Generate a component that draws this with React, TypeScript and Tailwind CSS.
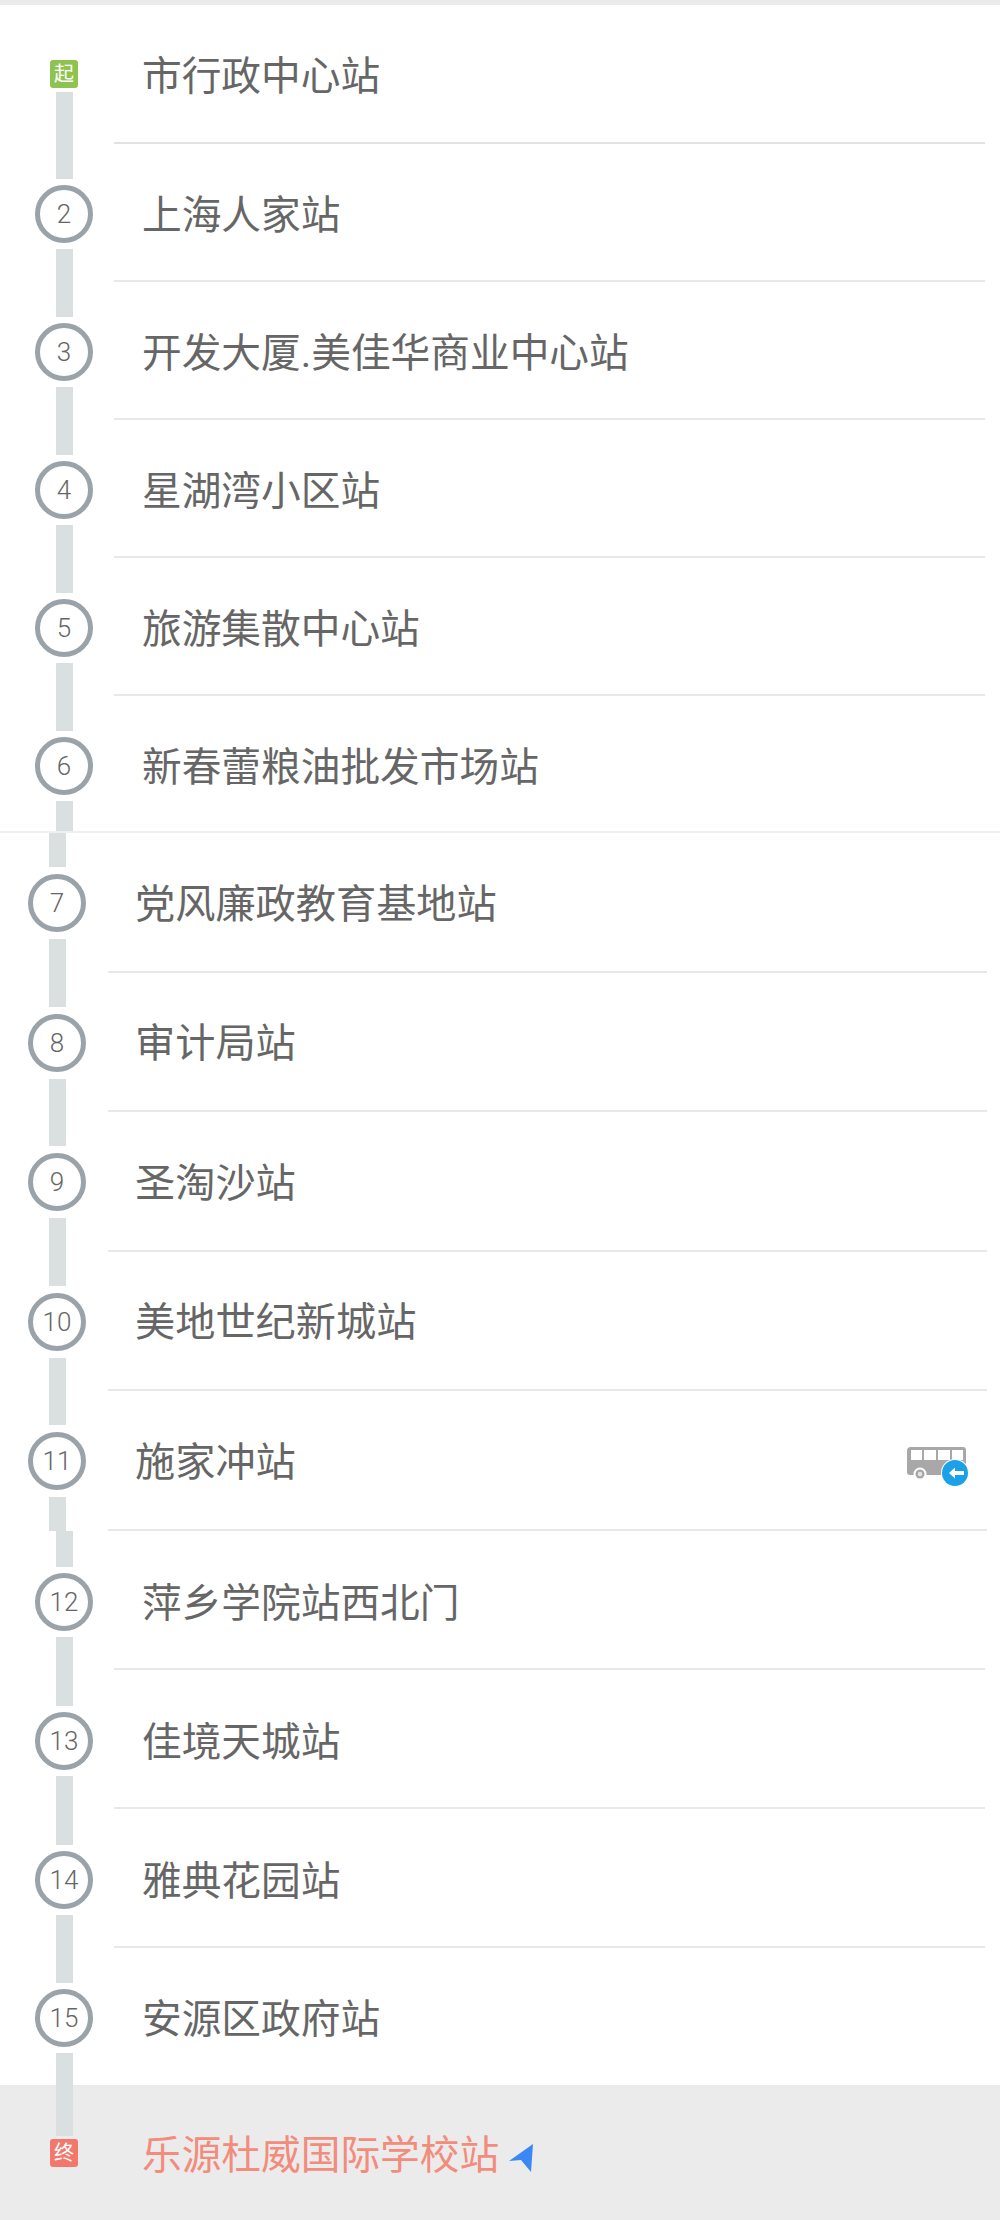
const FONT = "font-['Roboto','Noto_Sans_CJK_SC',sans-serif]";

type Stop = { n: number; name: string; bus?: boolean };

const SECTION_ONE: Stop[] = [
  { n: 2, name: "上海人家站" },
  { n: 3, name: "开发大厦.美佳华商业中心站" },
  { n: 4, name: "星湖湾小区站" },
  { n: 5, name: "旅游集散中心站" },
  { n: 6, name: "新春蕾粮油批发市场站" },
];

const SECTION_TWO: Stop[] = [
  { n: 7, name: "党风廉政教育基地站" },
  { n: 8, name: "审计局站" },
  { n: 9, name: "圣淘沙站" },
  { n: 10, name: "美地世纪新城站" },
  { n: 11, name: "施家冲站", bus: true },
];

const SECTION_THREE: Stop[] = [
  { n: 12, name: "萍乡学院站西北门" },
  { n: 13, name: "佳境天城站" },
  { n: 14, name: "雅典花园站" },
  { n: 15, name: "安源区政府站" },
];

function BusIcon() {
  return (
    <svg width="62" height="40" viewBox="0 0 62 40" className="shrink-0 mr-[18px] mt-[8px]">
      <path d="M4 0h52a3 3 0 0 1 3 3v25H3a3 3 0 0 1-3-3V4a4 4 0 0 1 4-4z" fill="#a8a8a8" />
      <rect x="4" y="3" width="11" height="10" fill="#fff" />
      <rect x="17" y="3" width="12" height="10" fill="#fff" />
      <rect x="31" y="3" width="12" height="10" fill="#fff" />
      <rect x="45" y="3" width="11" height="10" fill="#fff" />
      <circle cx="13" cy="27" r="6.5" fill="#fff" />
      <circle cx="13" cy="27" r="4.5" fill="#a8a8a8" />
      <circle cx="13" cy="27" r="2.2" fill="#e4e4e4" />
      <circle cx="48" cy="26" r="14" fill="#fff" />
      <circle cx="48" cy="26" r="13" fill="#1ba1e8" />
      <path d="M42 26l6-5.5v3.5h9v4h-9v3.5z" fill="#fff" />
    </svg>
  );
}

function NavArrow() {
  return (
    <svg width="24" height="28" viewBox="0 0 24 28" className="shrink-0 ml-[10px] mt-[6px]">
      <path d="M24 0L0 17l12-1 10 12z" fill="#3b88f5" />
    </svg>
  );
}

function Rail({ className }: { className: string }) {
  return <div className={`w-[17px] bg-[#dadfe0] ${className}`} />;
}

function StopRow({
  stop,
  rowClass,
  leftClass,
  textClass,
  nameClass,
  topRail,
  gapClass,
}: {
  stop: Stop;
  rowClass: string;
  leftClass: string;
  textClass: string;
  nameClass: string;
  topRail: string;
  gapClass: string;
}) {
  return (
    <div className={`flex ${rowClass}`}>
      <div className={`shrink-0 flex flex-col items-center ${leftClass}`}>
        <Rail className={`shrink-0 ${topRail}`} />
        <div
          className={`w-[58px] h-[58px] shrink-0 rounded-full border-[5px] border-[#9aa3a9] flex items-center justify-center text-[26px] font-light leading-none text-[#666666] ${gapClass}`}
        >
          {stop.n}
        </div>
        <Rail className="flex-1" />
      </div>
      <div className={`flex-1 flex items-center justify-between ${textClass}`}>
        <span className={`leading-none text-[#666666] ${nameClass}`}>{stop.name}</span>
        {stop.bus && <BusIcon />}
      </div>
    </div>
  );
}

export default function App() {
  return (
    <div className={`w-[1000px] h-[2220px] bg-white overflow-hidden flex flex-col ${FONT}`}>
      <div className="h-[5px] bg-[#ebebeb]" />

      <section className="border-b-2 border-[#f0f0f0] pr-[15px]">
        <div className="flex h-[139px]">
          <div className="shrink-0 w-[114px] pl-[35px] pr-[21px] flex flex-col items-center">
            <div className="h-[55px] shrink-0" />
            <div className="w-[28px] h-[28px] shrink-0 rounded-[3px] bg-[#8fc34f] text-white text-[20px] leading-none flex items-center justify-center">
              起
            </div>
            <Rail className="flex-1 mt-[4px]" />
          </div>
          <div className="flex-1 flex items-center border-b-2 border-[#e2e2e2] pl-[28px] pt-[6px]">
            <span className="text-[39.7px] leading-none text-[#666666]">市行政中心站</span>
          </div>
        </div>
        {SECTION_ONE.map((stop) => (
          <StopRow
            key={stop.n}
            stop={stop}
            rowClass={stop.n === 6 ? "h-[135px]" : "h-[138px]"}
            leftClass="w-[114px] pl-[35px] pr-[21px]"
            textClass={
              stop.n === 6
                ? "pl-[28px] pt-[8px]"
                : "pl-[28px] pt-[8px] border-b-2 border-[#e8e8e8]"
            }
            nameClass="text-[39.7px]"
            topRail="h-[35px]"
            gapClass="my-[6px]"
          />
        ))}
      </section>

      <section className="pr-[13px]">
        {SECTION_TWO.map((stop) => (
          <StopRow
            key={stop.n}
            stop={stop}
            rowClass="h-[139.6px]"
            leftClass="w-[108px] pl-[28px] pr-[22px]"
            textClass="pl-[27px] pt-[6px] border-b-2 border-[#e8e8e8]"
            nameClass="text-[40.2px]"
            topRail="h-[34px]"
            gapClass="my-[7px]"
          />
        ))}
      </section>

      <section className="pr-[15px]">
        {SECTION_THREE.map((stop) => (
          <StopRow
            key={stop.n}
            stop={stop}
            rowClass={stop.n === 15 ? "h-[137px]" : "h-[139px]"}
            leftClass="w-[114px] pl-[35px] pr-[21px]"
            textClass={
              stop.n === 15
                ? "pl-[28px] pt-[6px]"
                : "pl-[28px] pt-[8px] border-b-2 border-[#e8e8e8]"
            }
            nameClass="text-[39.7px]"
            topRail={stop.n === 15 ? "h-[35px]" : "h-[36px]"}
            gapClass="my-[6px]"
          />
        ))}
      </section>

      <div className="flex-1 flex bg-[#ebebeb]">
        <div className="shrink-0 w-[114px] pl-[35px] pr-[21px] flex flex-col items-center">
          <Rail className="h-[51px] shrink-0" />
          <div className="mt-[3px] w-[28px] h-[28px] shrink-0 rounded-[3px] bg-[#f2786b] text-white text-[20px] leading-none flex items-center justify-center">
            终
          </div>
        </div>
        <div className="flex-1 flex items-center pl-[28px] pt-[6px]">
          <span className="text-[39.7px] leading-none text-[#f28c7c]">乐源杜威国际学校站</span>
          <NavArrow />
        </div>
      </div>
    </div>
  );
}
